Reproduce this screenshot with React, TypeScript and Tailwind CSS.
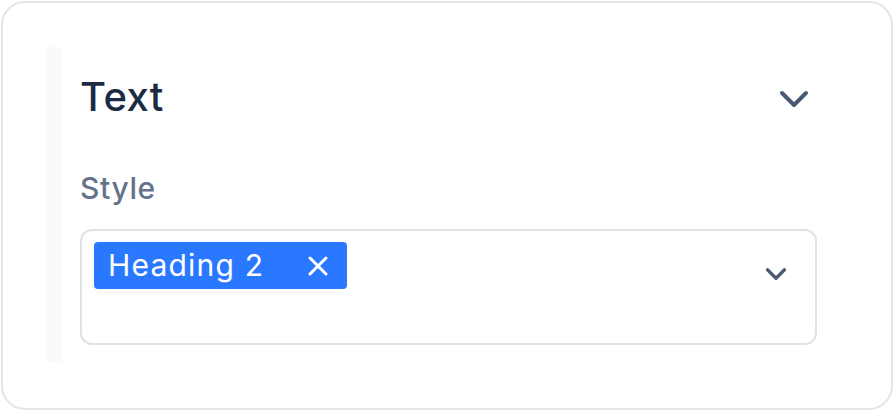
import { ChevronDown } from "lucide-react";

export default function App() {
  return (
    <div
      className="w-[894px] h-[411px] bg-white p-px"
      style={{ fontFamily: "Inter, 'Noto Sans', sans-serif" }}
    >
      <div className="w-[892px] h-[409px] rounded-[24px] border-2 border-[#e3e5e9] bg-white pl-[44px] pt-[44px]">
        <div className="flex h-[315px]">
          <div className="w-[15px] bg-[#fafafb]" />
          <div className="w-[737px] ml-[18px]">
            {/* section header */}
            <div className="mt-[26px] flex h-12 items-center justify-between">
              <h2 className="text-[40px] leading-[48px] font-medium tracking-[0.01em] text-[#1c2a43]">Text</h2>
              <ChevronDown className="mr-[-1px] mt-1 text-[#4a5a75]" size={48} strokeWidth={2} />
            </div>

            <div className="mt-[51px] text-[30px] leading-8 font-medium tracking-[0.02em] text-[#647389]">Style</div>

            {/* multi select */}
            <div className="mt-[25px] flex h-[116px] items-start justify-between rounded-xl border-2 border-[#dfe2e7] pl-3 pt-[11px] pr-[22px]">
              <span className="flex h-[47px] items-center rounded-[4px] bg-[#2a78ff] pl-[14px] pr-[18px] text-[30px] tracking-[0.04em] text-white">
                Heading 2
                <svg className="ml-[43px]" width="22" height="22" viewBox="0 0 22 22" fill="none" stroke="currentColor" strokeWidth="3" strokeLinecap="round">
                  <path d="M3 3l16 16M19 3L3 19" />
                </svg>
              </span>
              <ChevronDown className="mt-[15px] text-[#4a5a75]" size={34} strokeWidth={2.3} />
            </div>
          </div>
        </div>
      </div>
    </div>
  );
}
